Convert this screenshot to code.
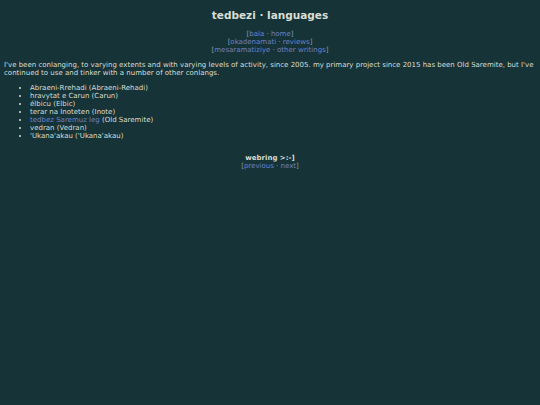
export default function App() {
  const font = { fontFamily: '"DejaVu Sans", Verdana, sans-serif' };
  const L = ({ children }) => <span className="text-[#6f80c4]">{children}</span>;
  const B = ({ children }) => <span className="text-[#8a9ca3]">{children}</span>;
  const langs = [
    ["Abraeni-Rrehadi", "Abraeni-Rehadi", false],
    ["hravytat e Carun", "Carun", false],
    ["élbicu", "Elbic", false],
    ["terar na Inoteten", "Inote", false],
    ["tedbez Saremuz leg", "Old Saremite", true],
    ["vedran", "Vedran", false],
    ["'Ukana'akau", "'Ukana'akau", false],
  ];
  return (
    <div className="w-[540px] h-[405px] bg-[#163438] text-[#d9ddd3] overflow-hidden" style={font}>
      <h1 className="text-center font-bold text-[10.5px] leading-[13px] pt-[9px]">tedbezi · languages</h1>
      <div className="text-center text-[7px] leading-[8px] mt-[8px]">
        <div><B>[</B><L>bala</L><B> · </B><L>home</L><B>]</B></div>
        <div><B>[</B><L>okadenamati</L><B> · </B><L>reviews</L><B>]</B></div>
        <div><B>[</B><L>mesaramatiziye</L><B> · </B><L>other writings</L><B>]</B></div>
      </div>
      <p className="text-[7px] leading-[8px] mt-[7px] pl-[4px] pr-[2px]">
        I've been conlanging, to varying extents and with varying levels of activity, since 2005. my primary project since 2015 has been Old Saremite, but I've continued to use and tinker with a number of other conlangs.
      </p>
      <ul className="text-[7px] leading-[8px] mt-[7px] pl-[30px] list-disc">
        {langs.map(([n, e, link]) => (
          <li key={n}>
            {link ? <L>{n}</L> : n} ({e})
          </li>
        ))}
      </ul>
      <div className="text-center text-[7px] leading-[8px] mt-[14px]">
        <div className="font-bold">webring &gt;:-]</div>
        <div><B>[</B><L>previous</L><B> · </B><L>next</L><B>]</B></div>
      </div>
    </div>
  );
}
